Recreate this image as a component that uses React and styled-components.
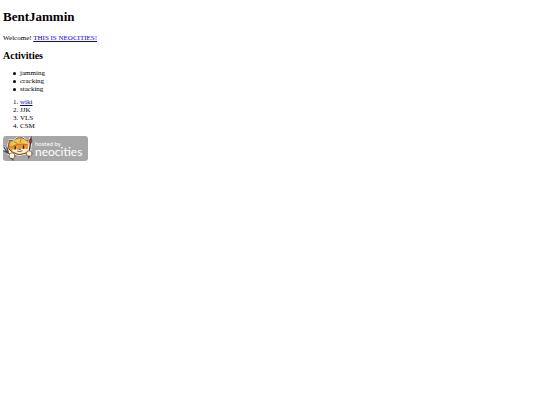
import React from "react";
import styled, { createGlobalStyle } from "styled-components";

const GlobalStyle = createGlobalStyle`
  body {
    margin: 0;
    background: #fff;
    color: #000;
    font: 7px/8px "Liberation Serif", "Times New Roman", serif;
  }
`;

const Page = styled.main`
  padding: 9px 3px 3px;
`;

const Title = styled.h1`
  margin: 0 0 9px;
  font-size: 13px;
  line-height: 16px;
`;

const Intro = styled.p`
  margin: 0 0 8px;
`;

const Heading = styled.h2`
  margin: 0 0 7px;
  font-size: 10px;
  line-height: 12px;
`;

const TextLink = styled.a`
  color: #0000ee;
  text-decoration: underline;
`;

const BulletList = styled.ul`
  margin: 0 0 5px;
  padding-left: 10px;
  list-style: none;
`;

const BulletItem = styled.li`
  display: flex;
  align-items: center;
  gap: 4px;

  &::before {
    content: "";
    width: 3px;
    height: 3px;
    border-radius: 50%;
    background: #000;
  }
`;

const NumberList = styled.ol`
  margin: 0 0 6px;
  padding-left: 17px;
`;

const BadgeLink = styled.a`
  display: inline-block;
`;

const Badge = styled.svg`
  display: block;
  width: 85px;
  height: 25px;
`;

const BadgeText = styled.text`
  fill: #fff;
  font-family: Lato, sans-serif;
  font-size: ${(p) => p.$size}px;
`;

function HostedBadge() {
  return (
    <Badge viewBox="0 0 85 25" role="img" aria-label="Hosted by Neocities">
      <rect width="85" height="25" rx="3" fill="#a7a7a7" />
      <g strokeLinecap="round" strokeLinejoin="round">
        <path d="M5 8 6.4 3.5 10 4.3 14 1.5 20 1.2 24 4.4 27 5.2 26.4 10.5 28 14 24 17.5 16 19.5 9 17 5.6 13Z" fill="#fff" stroke="#fff" strokeWidth="1" />
        <path d="M5.6 8.5 6.4 4.2 10.5 4.9 14 2.1 19 1.6 23 4.3 26.4 5.2 25.6 10 27 14 23 17.2 16 18.8 9.3 16.4 6 13Z" fill="#e8953b" stroke="#69401f" strokeWidth=".9" />
        <path d="M7 8.4Q10 3.4 16 2.6 22 2 25 6.4L24.2 8.8Q16 6 8.2 11.2Z" fill="#f2c750" />
        <path d="M8 11Q15 6.6 24.3 8.8M11 5.6 14.4 7.4M18 3.2 17.2 6.5" fill="none" stroke="#a56b20" strokeWidth=".8" />
        <path d="M9 14Q12 12.6 15.5 13.6 20 11.8 24.5 13.3L25 14.8 21.5 16.8 16 17.8 10.4 15.8Z" fill="#fff2dc" />
        <path d="M12.2 10.8V12.9M20.5 10V12.2" stroke="#352216" strokeWidth="1.4" />
        <path d="M16 13.4H17.6M14.5 15.2Q16.8 16.5 19.3 14.8" fill="none" stroke="#52301e" strokeWidth=".8" />
        <path d="M2 13.4 8 18.6" stroke="#fff" strokeWidth="4" />
        <path d="M1.4 11.8 3.8 15.8 8 19.2M3.8 11.8 5.2 15.8M.8 14.8 4.4 17" fill="none" stroke="#484848" strokeWidth="1.3" />
        <circle cx="9" cy="19.8" r="3" fill="#fff8e8" stroke="#6e4d32" strokeWidth=".7" />
        <path d="M8 22.3 10.3 24" stroke="#555" strokeWidth="1.2" />
        <path d="M27.6 2.8 26.4 14" stroke="#fff" strokeWidth="3.4" />
        <path d="M27.4 7 26.4 15" stroke="#4e3029" strokeWidth="1.4" />
        <path d="M28.2 1Q25.4 3.8 26.5 7L28.4 7.2Q30 4 28.2 1Z" fill="#8e3931" stroke="#4d2425" strokeWidth=".5" />
        <circle cx="26.3" cy="17.6" r="2.8" fill="#fff8e8" stroke="#6e4d32" strokeWidth=".7" />
        <path d="M26 20.2 25.7 22" stroke="#58372b" strokeWidth="1.2" />
      </g>
      <BadgeText $size={6} x="32" y="10">hosted by</BadgeText>
      <BadgeText $size={12} x="32" y="20">neocities</BadgeText>
    </Badge>
  );
}

export default function App() {
  return (
    <>
      <GlobalStyle />
      <Page>
        <Title>BentJammin</Title>
        <Intro>
          Welcome! <TextLink href="#neocities">THIS IS NEOCITIES!</TextLink>
        </Intro>
        <Heading>Activities</Heading>
        <BulletList>
          <BulletItem>jamming</BulletItem>
          <BulletItem>cracking</BulletItem>
          <BulletItem>stacking</BulletItem>
        </BulletList>
        <NumberList>
          <li><TextLink href="#wiki">wiki</TextLink></li>
          <li>JJK</li>
          <li>VLS</li>
          <li>CSM</li>
        </NumberList>
        <BadgeLink href="#host">
          <HostedBadge />
        </BadgeLink>
      </Page>
    </>
  );
}
